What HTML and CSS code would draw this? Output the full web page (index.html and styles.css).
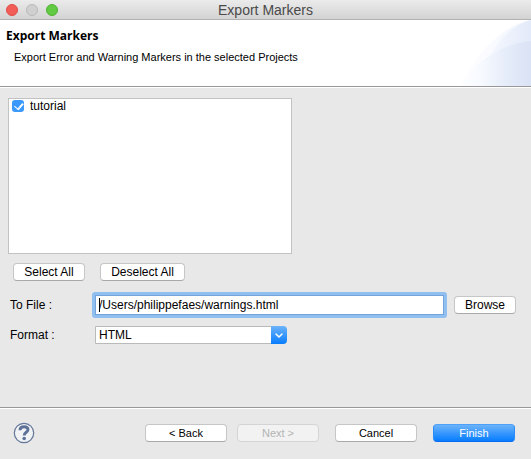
FILE: index.html
```html
<!DOCTYPE html>
<html lang="en">
<head>
<meta charset="utf-8">
<title>Export Markers</title>
<link rel="stylesheet" href="styles.css">
</head>
<body>
<div class="window">
  <div class="titlebar">
    <div class="lights">
      <button class="light close" aria-label="Close"></button>
      <button class="light minimize" aria-label="Minimize" disabled></button>
      <button class="light zoom" aria-label="Zoom"></button>
    </div>
    <span class="window-title">Export Markers</span>
  </div>
  <header class="banner">
    <div class="banner-text">
      <h1>Export Markers</h1>
      <p>Export Error and Warning Markers in the selected Projects</p>
    </div>
    <svg class="swoosh" viewBox="0 0 75 66" aria-hidden="true">
      <defs>
        <linearGradient id="outer" x1="0" y1="0" x2="75" y2="0" gradientUnits="userSpaceOnUse">
          <stop offset="0" stop-color="#fff"/><stop offset=".45" stop-color="#fafbff"/><stop offset="1" stop-color="#edf2fc"/>
        </linearGradient>
        <linearGradient id="middle" x1="20" y1="0" x2="75" y2="0" gradientUnits="userSpaceOnUse">
          <stop offset="0" stop-color="#fbfcff"/><stop offset="1" stop-color="#e3eaf9"/>
        </linearGradient>
        <linearGradient id="inner" x1="0" y1="0" x2="75" y2="0" gradientUnits="userSpaceOnUse">
          <stop offset="0" stop-color="#fff"/><stop offset=".35" stop-color="#f6f9fe"/><stop offset=".7" stop-color="#e4ebf9"/><stop offset="1" stop-color="#dae2f5"/>
        </linearGradient>
      </defs>
      <path d="M4 66C16 38 45 6 75 0V66Z" fill="url(#outer)"/>
      <path d="M20 66C28 40 48 7 75 0V66Z" fill="url(#middle)"/>
      <path d="M4 66C16 44 46 23 75 21V66Z" fill="url(#inner)"/>
    </svg>
  </header>
  <main class="content">
    <div class="projects">
      <label class="project">
        <input type="checkbox" checked>
        <span>tutorial</span>
      </label>
    </div>
    <div class="list-actions">
      <button class="btn">Select All</button>
      <button class="btn wide">Deselect All</button>
    </div>
    <div class="form">
      <label for="file">To File :</label>
      <div class="file-field">
        <input id="file" type="text" value="/Users/philippefaes/warnings.html">
        <span class="caret"></span>
      </div>
      <button class="btn browse">Browse</button>
      <label for="format">Format :</label>
      <div class="select-field">
        <select id="format"><option>HTML</option></select>
        <svg class="arrow" viewBox="0 0 16 18" aria-hidden="true"><path d="M5 8L8 11L11 8" fill="none" stroke="#fff" stroke-width="1.5" stroke-linecap="round" stroke-linejoin="round"/></svg>
      </div>
    </div>
  </main>
  <footer class="footer">
    <button class="help" aria-label="Help">
      <svg viewBox="0 0 22 22" aria-hidden="true">
        <circle cx="11" cy="11" r="9.7" fill="#f1f2f4" stroke="#64779b" stroke-width="1.2"/>
        <path d="M7 8.3C7 5.8 8.8 4.7 11.1 4.7C13.4 4.7 15 5.8 15 7.8C15 10.2 11.2 10.4 11.2 13.4" fill="none" stroke="#5e7198" stroke-width="2.9"/>
        <circle cx="11.2" cy="16.5" r="1.8" fill="#5e7198"/>
      </svg>
    </button>
    <div class="nav">
      <button class="btn">&lt; Back</button>
      <button class="btn" disabled>Next &gt;</button>
    </div>
    <div class="confirm">
      <button class="btn">Cancel</button>
      <button class="btn primary">Finish</button>
    </div>
  </footer>
</div>
</body>
</html>
```
FILE: styles.css
```css
* { box-sizing: border-box; }

body {
  margin: 0;
  background: #e8e8e8;
  color: #000;
  font: 11px/14px "Liberation Sans", Arial, sans-serif;
}

button, input, select { font: inherit; color: inherit; margin: 0; }

.window {
  min-height: 100vh;
  display: flex;
  flex-direction: column;
}

.titlebar {
  display: grid;
  grid-template-columns: 1fr auto 1fr;
  align-items: center;
  height: 20px;
  padding: 0 6px;
  background: linear-gradient(#ebebeb, #d3d3d3);
  border-bottom: 1px solid #b1b1b1;
}

.lights { display: flex; gap: 8px; }

.light {
  width: 12px;
  height: 12px;
  padding: 0;
  border: 1px solid;
  border-radius: 50%;
}

.close { background: #f25e57; border-color: #de4c46; }
.minimize { background: #d0d0d0; border-color: #b9b9b9; }
.zoom { background: #62cb43; border-color: #50b133; }

.window-title { font-size: 14px; line-height: 18px; color: #4a4a4a; }

.banner {
  display: flex;
  justify-content: space-between;
  height: 67px;
  background: #fff;
  border-bottom: 1px solid #989898;
}

.banner-text { padding: 8px 0 0 6px; }

h1 {
  margin: 0;
  font: bold 12px/16px "Open Sans", sans-serif;
}

p { margin: 6px 0 0 8px; }

.swoosh { width: 75px; height: 66px; }

.content {
  flex: 1;
  font-size: 12px;
  padding: 10px 15px 0 8px;
  border-top: 1px solid #fff;
}

.projects {
  width: 284px;
  height: 156px;
  padding: 0 3px;
  background: #fff;
  border: 1px solid #c2c2c2;
}

.project { display: flex; align-items: center; gap: 6px; }

.project input {
  appearance: none;
  width: 12px;
  height: 12px;
  border-radius: 3px;
  background: #3b99fc;
  display: grid;
  place-items: center;
}

.project input:checked::before {
  content: "";
  width: 4px;
  height: 7px;
  border: solid #fff;
  border-width: 0 1px 1px 0;
  box-shadow: 1px 0 #fff;
  transform: translateY(-1px) rotate(40deg);
}

.list-actions { display: flex; gap: 15px; padding: 9px 5px 11px; }

.btn {
  width: 72px;
  height: 18px;
  padding: 0;
  line-height: 16px;
  text-align: center;
  background: #fff;
  border: 1px solid #c6c6c6;
  border-bottom-color: #a9a9a9;
  border-radius: 4px;
}

.btn.wide { width: 85px; }
.btn.browse { width: 62px; }
.btn:disabled { color: #b4b4b4; background: #f2f2f2; border-color: #d4d4d4; }

.btn.primary {
  color: #fff;
  background: linear-gradient(#6cb3fa, #077dff);
  border-color: #4ea1fb #2c8cf9 #0a6bf0;
}

.form {
  display: grid;
  grid-template-columns: 84px 1fr 62px;
  align-items: center;
  row-gap: 8px;
}

.form label { padding-left: 2px; }

.file-field {
  position: relative;
  margin-right: 7px;
  border: 3px solid #91bff0;
  border-radius: 3px;
}

.file-field input {
  display: block;
  width: 100%;
  height: 20px;
  padding: 0 3px;
  border: 1px solid #73a5dc;
  background: #fff;
  outline: 0;
}

.caret {
  position: absolute;
  left: 4px;
  top: 3px;
  width: 1px;
  height: 14px;
  background: #000;
}

.select-field {
  position: relative;
  width: 192px;
  margin-left: 3px;
}

select {
  appearance: none;
  display: block;
  width: 100%;
  height: 18px;
  padding: 0 20px 0 3px;
  background: #fff;
  border: 1px solid #bababa;
  border-radius: 0 4px 4px 0;
}

.arrow {
  position: absolute;
  top: 0;
  right: 0;
  width: 16px;
  height: 18px;
  border-radius: 0 4px 4px 0;
  background: linear-gradient(#6cb3fa, #077dff);
  pointer-events: none;
}

.footer {
  display: flex;
  align-items: center;
  height: 52px;
  padding: 0 16px 2px 13px;
  border-top: 1px solid #989898;
  box-shadow: inset 0 1px #fff;
}

.help {
  width: 22px;
  height: 22px;
  padding: 0;
  border: 0;
  background: none;
  margin-right: auto;
}

.help svg { display: block; }
.nav, .confirm { display: flex; gap: 10px; }
.confirm { gap: 16px; margin-left: 16px; }
.footer .btn { width: 82px; }
```
